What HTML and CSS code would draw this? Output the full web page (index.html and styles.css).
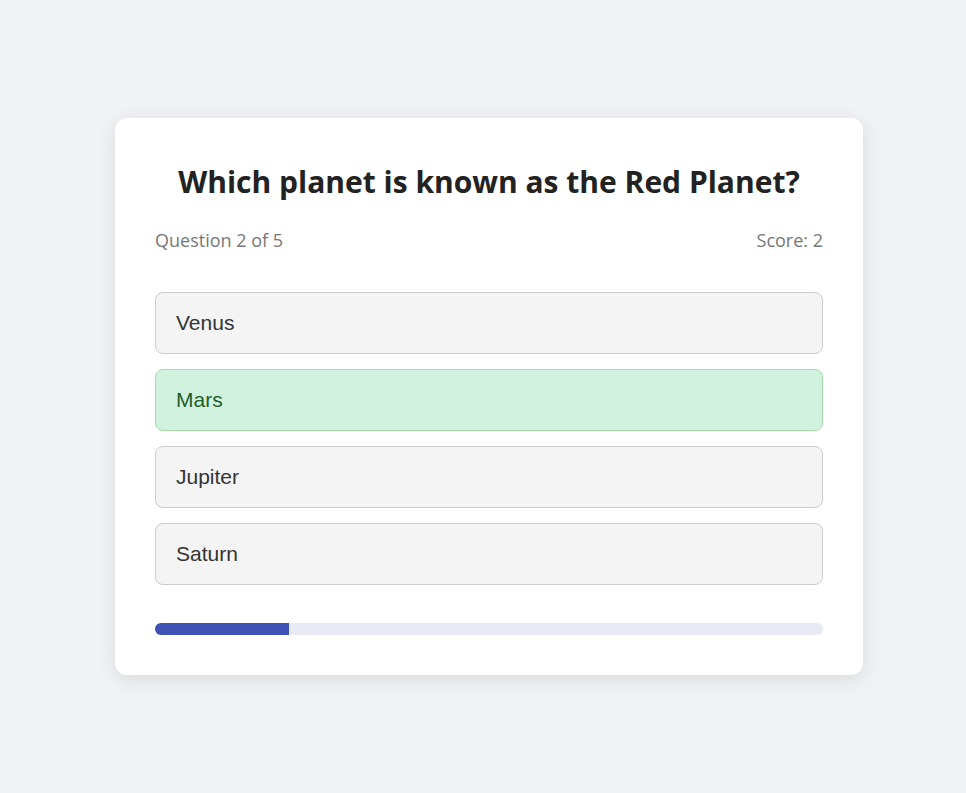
FILE: index.html
```
<!DOCTYPE html>
<html lang="en">
<head>
<meta charset="utf-8">
<title>Quiz</title>
<link rel="stylesheet" href="styles.css">
</head>
<body>
<div class="page">
  <div class="card">
    <h1 class="title">Which planet is known as the Red Planet?</h1>
    <div class="meta">
      <span>Question 2 of 5</span>
      <span>Score: 2</span>
    </div>
    <div class="options">
      <div class="option">Venus</div>
      <div class="option correct">Mars</div>
      <div class="option">Jupiter</div>
      <div class="option">Saturn</div>
    </div>
    <div class="progress"><div class="progress-fill" style="width: 20%"></div></div>
  </div>
</div>
</body>
</html>
```
FILE: styles.css
```
html, body {
  margin: 0;
  padding: 0;
  background: #f0f2f5;
}
.page {
  min-height: 793px;
  display: flex;
  align-items: center;
  justify-content: center;
  padding-left: 12px;
  box-sizing: border-box;
}
.card {
  width: 748px;
  box-sizing: border-box;
  background: #ffffff;
  border-radius: 12px;
  padding: 40px;
  box-shadow: 0 4px 20px rgba(0, 0, 0, 0.1);
}
.title {
  margin: 0 0 26px;
  padding-top: 3px;
  text-align: center;
  font-family: "Open Sans", sans-serif;
  font-weight: 700;
  font-size: 30px;
  line-height: 41px;
  color: #222222;
}
.meta {
  display: flex;
  justify-content: space-between;
  font-family: "Open Sans", sans-serif;
  font-size: 18px;
  line-height: 24px;
  color: #777777;
  margin-bottom: 40px;
}
.options {
  display: flex;
  flex-direction: column;
  gap: 15px;
}
.option {
  border: 1px solid #cccccc;
  border-radius: 8px;
  background: #f4f4f4;
  padding: 0 20px;
  line-height: 60px;
  font-family: "Liberation Sans", Arial, sans-serif;
  font-size: 21px;
  color: #333333;
}
.option.correct {
  background: #d1f2df;
  border-color: #a5dcaa;
  color: #1d5e2b;
}
.progress {
  margin-top: 38px;
  height: 12px;
  border-radius: 6px;
  background: #e8eaf6;
  overflow: hidden;
}
.progress-fill {
  height: 100%;
  background: #3f51b5;
}
```
